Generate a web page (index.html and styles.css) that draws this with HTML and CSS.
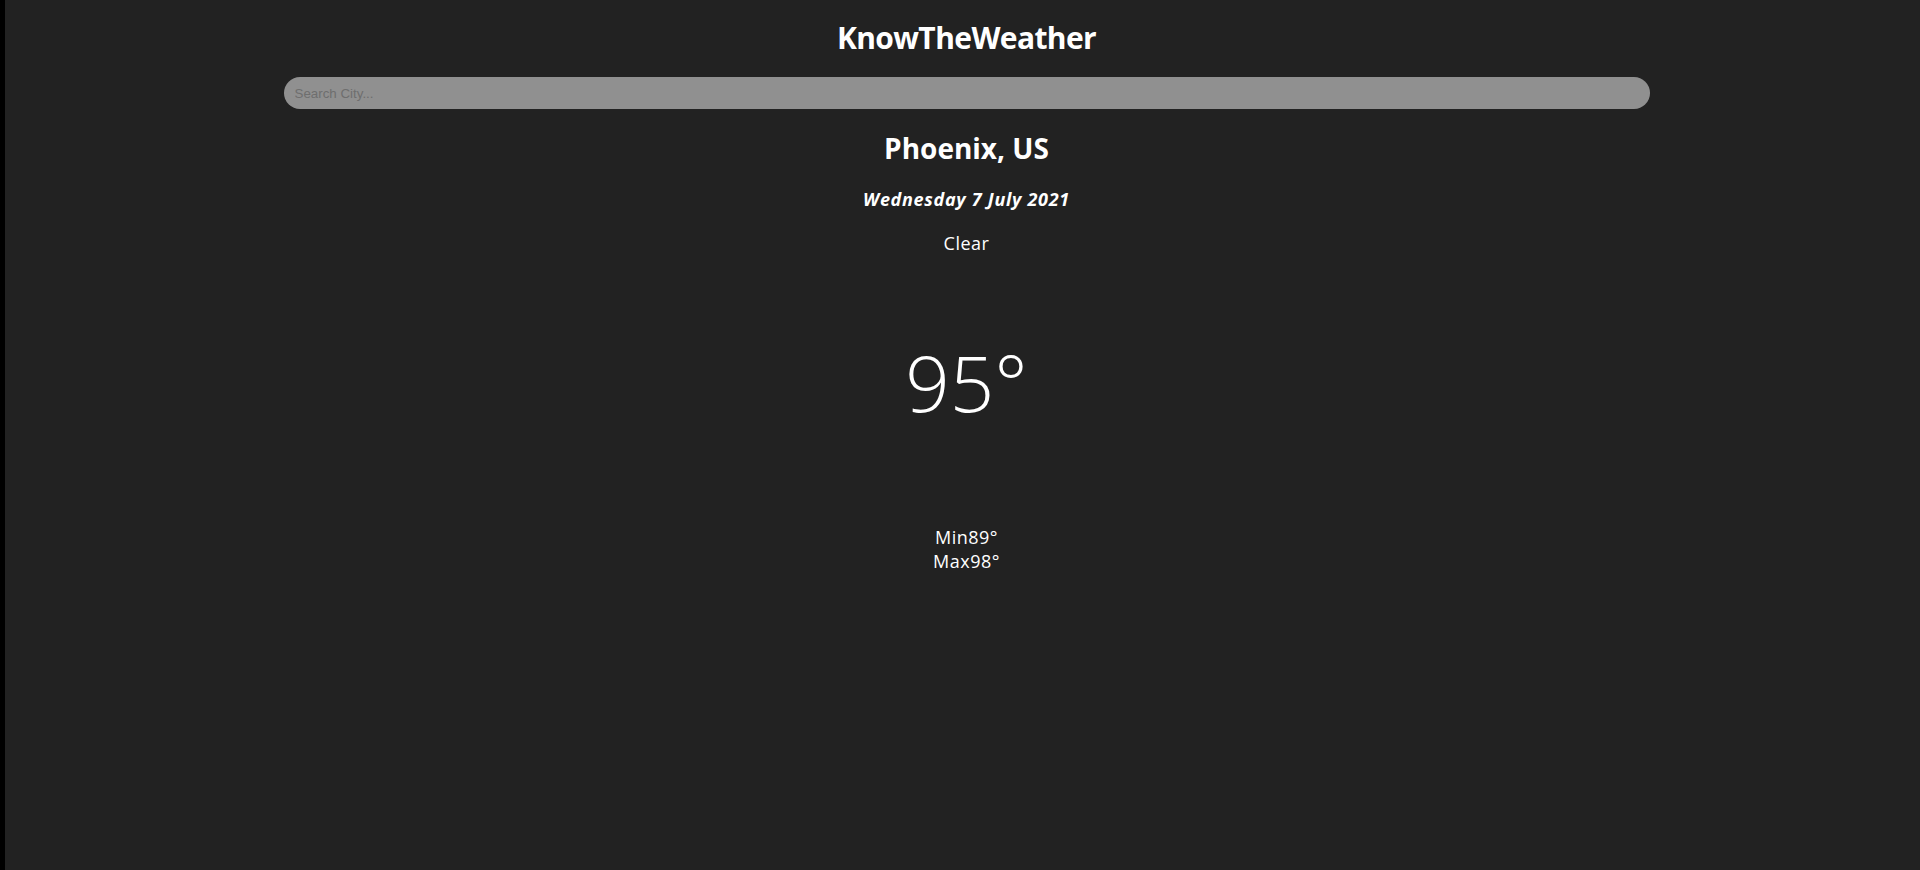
FILE: index.html
```html
<!DOCTYPE html>
<html lang="en">
<head>
<meta charset="utf-8">
<title>KnowTheWeather</title>
<link rel="stylesheet" href="styles.css">
</head>
<body>
<main class="app">
  <h1 class="title">KnowTheWeather</h1>
  <div class="search-box">
    <input class="search-bar" type="text" placeholder="Search City...">
  </div>
  <section class="weather">
    <h2 class="location">Phoenix, US</h2>
    <p class="date">Wednesday 7 July 2021</p>
    <p class="condition">Clear</p>
    <p class="temp">95°</p>
    <div class="range">
      <p class="range-row">Min89°</p>
      <p class="range-row">Max98°</p>
    </div>
  </section>
</main>
</body>
</html>
```
FILE: styles.css
```css
html, body {
  margin: 0;
  padding: 0;
}

body {
  background: #222222;
  border-left: 5px solid #000000;
  min-height: 870px;
  box-sizing: border-box;
  padding-left: 8px;
  color: #ffffff;
  font-family: "Open Sans", "Noto Sans", sans-serif;
}

.app {
  display: flex;
  flex-direction: column;
  align-items: center;
  text-align: center;
}

.title {
  margin: 16px 0 0;
  font-size: 30px;
  line-height: 44px;
  font-weight: 700;
  letter-spacing: -0.6px;
}

.search-box {
  margin-top: 17px;
  display: flex;
  justify-content: center;
  width: 100%;
}

.search-bar {
  width: 1366px;
  height: 32px;
  box-sizing: border-box;
  border: none;
  outline: none;
  border-radius: 16px;
  background: #909090;
  padding: 0 11px;
  font-family: "Liberation Sans", Arial, sans-serif;
  font-size: 13.33px;
  color: #222222;
}

.search-bar::placeholder {
  color: #6e6e6e;
}

.weather {
  display: flex;
  flex-direction: column;
  align-items: center;
}

.location {
  margin: 20px 0 0;
  font-size: 28px;
  line-height: 38px;
  font-weight: 700;
}

.date {
  margin: 20px 0 0;
  font-size: 18px;
  line-height: 24px;
  font-weight: 700;
  font-style: italic;
  letter-spacing: 0.7px;
}

.condition {
  margin: 20px 0 0;
  font-size: 18px;
  line-height: 24px;
  font-weight: 400;
  letter-spacing: 0.5px;
}

.temp {
  margin: 74px 0 0;
  font-size: 78px;
  line-height: 106px;
  font-weight: 300;
}

.range {
  margin-top: 90px;
}

.range-row {
  margin: 0;
  font-size: 18px;
  line-height: 24px;
  letter-spacing: 0.5px;
}
```
